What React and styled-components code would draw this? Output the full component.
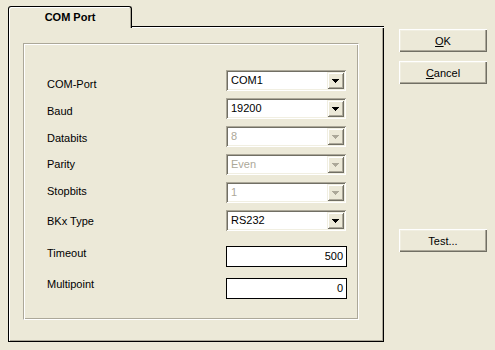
import React from 'react'
import styled, { createGlobalStyle } from 'styled-components'

const GlobalStyle = createGlobalStyle`
    html, body {
        margin: 0;
        padding: 0;
        background: #ece9d8;
    }
    body {
        font-family: "Liberation Sans", Arial, sans-serif;
        font-size: 11px;
        color: #000;
    }
`

const Dialog = styled.div`
    width: 495px;
    height: 350px;
    box-sizing: border-box;
    display: flex;
    align-items: flex-start;
    padding: 6px 0 0 8px;
    background: #ece9d8;
`

const TabControl = styled.div`
    width: 376px;
    display: flex;
    flex-direction: column;
`

const TabStrip = styled.div`
    display: flex;
    height: 22px;
`

const Tab = styled.div`
    width: 124px;
    height: 22px;
    box-sizing: border-box;
    border: 1px solid #000;
    border-bottom: none;
    border-radius: 3px 3px 0 0;
    box-shadow: inset 1px 1px 0 #fff, inset -1px 0 0 #aca899;
    padding-top: 4px;
    text-align: center;
    font-weight: bold;
    line-height: 13px;
`

const TabFiller = styled.div`
    flex: 1;
    height: 22px;
    box-sizing: border-box;
    border-bottom: 1px solid #fff;
    box-shadow: inset 0 -1px 0 #000;
`

const Pane = styled.div`
    height: 314px;
    box-sizing: border-box;
    display: flex;
    border: 1px solid #000;
    border-top: none;
    box-shadow: inset 1px 0 0 #fff, inset -1px -1px 0 #aca899;
    padding: 15px 24px 21px 14px;
`

const GroupBox = styled.div`
    flex: 1;
    box-sizing: border-box;
    border-top: 1px solid #aca899;
    border-left: 1px solid #aca899;
    border-right: 1px solid #fff;
    border-bottom: 1px solid #fff;
    box-shadow: inset 1px 1px 0 #fff, inset -1px -1px 0 #aca899;
    padding: 26px 0 0 23px;
`

const Field = styled.div`
    display: grid;
    grid-template-columns: 179px 121px;
    height: 21px;
    margin-top: ${p => p.$gap || 0}px;
`

const Label = styled.div`
    padding-top: ${p => p.$drop || 0}px;
    line-height: 13px;
`

const Combo = styled.div`
    width: 120px;
    height: 21px;
    box-sizing: border-box;
    display: flex;
    padding: 2px;
    background: #fff;
    color: ${p => p.$disabled ? '#aca899' : '#000'};
    box-shadow: inset 1px 1px 0 #aca899, inset -1px -1px 0 #fff,
        inset 2px 2px 0 #716f64, inset -2px -2px 0 #f1efe2;
`

const ComboValue = styled.div`
    flex: 1;
    padding-left: 3px;
    line-height: 17px;
`

const DropButton = styled.div`
    width: 17px;
    height: 17px;
    box-sizing: border-box;
    display: flex;
    align-items: center;
    justify-content: center;
    padding: 1px 1px 0 0;
    background: #ece9d8;
    box-shadow: inset 1px 1px 0 #f1efe2, inset -1px -1px 0 #716f64,
        inset 2px 2px 0 #fff, inset -2px -2px 0 #aca899;

    svg {
        display: block;
    }
`

const Edit = styled.div`
    width: 121px;
    height: 21px;
    box-sizing: border-box;
    border: 1px solid #000;
    background: #fff;
    text-align: right;
    padding-right: 3px;
    line-height: 19px;
`

const ButtonColumn = styled.div`
    display: flex;
    flex-direction: column;
    margin-left: 15px;
    padding-top: 23px;
`

const Button = styled.button`
    width: 88px;
    height: 23px;
    margin-top: ${p => p.$gap || 0}px;
    padding: 0;
    border: none;
    background: #ece9d8;
    font-family: "Liberation Sans", Arial, sans-serif;
    font-size: 11px;
    color: #000;
    box-shadow: inset 1px 1px 0 #fff, inset -1px -1px 0 #716f64,
        inset -2px -2px 0 #aca899, inset 2px 2px 0 #f1efe2;

    u {
        text-underline-offset: 1px;
    }
`

const Arrow = ({ disabled }) => (
    <svg width="7" height="4" viewBox="0 0 7 4">
        <polygon points="0,0 7,0 3.5,4" fill={disabled ? '#aca899' : '#000'} shapeRendering="crispEdges" />
    </svg>
)

const fields = [
    { label: 'COM-Port', type: 'combo', value: 'COM1', gap: 0, drop: 8 },
    { label: 'Baud', type: 'combo', value: '19200', gap: 7, drop: 7 },
    { label: 'Databits', type: 'combo', value: '8', gap: 7, drop: 6, disabled: true },
    { label: 'Parity', type: 'combo', value: 'Even', gap: 7, drop: 4, disabled: true },
    { label: 'Stopbits', type: 'combo', value: '1', gap: 7, drop: 3, disabled: true },
    { label: 'BKx Type', type: 'combo', value: 'RS232', gap: 7, drop: 5 },
    { label: 'Timeout', type: 'edit', value: '500', gap: 15, drop: 1 },
    { label: 'Multipoint', type: 'edit', value: '0', gap: 11, drop: 0 },
]

export default function App() {
    return (
        <>
            <GlobalStyle />
            <Dialog>
                <TabControl>
                    <TabStrip>
                        <Tab>COM Port</Tab>
                        <TabFiller />
                    </TabStrip>
                    <Pane>
                        <GroupBox>
                            {fields.map(f => (
                                <Field key={f.label} $gap={f.gap}>
                                    <Label $drop={f.drop}>{f.label}</Label>
                                    {f.type === 'combo' ? (
                                        <Combo $disabled={f.disabled}>
                                            <ComboValue>{f.value}</ComboValue>
                                            <DropButton>
                                                <Arrow disabled={f.disabled} />
                                            </DropButton>
                                        </Combo>
                                    ) : (
                                        <Edit>{f.value}</Edit>
                                    )}
                                </Field>
                            ))}
                        </GroupBox>
                    </Pane>
                </TabControl>
                <ButtonColumn>
                    <Button><u>O</u>K</Button>
                    <Button $gap={9}><u>C</u>ancel</Button>
                    <Button $gap={145}>Test...</Button>
                </ButtonColumn>
            </Dialog>
        </>
    )
}
